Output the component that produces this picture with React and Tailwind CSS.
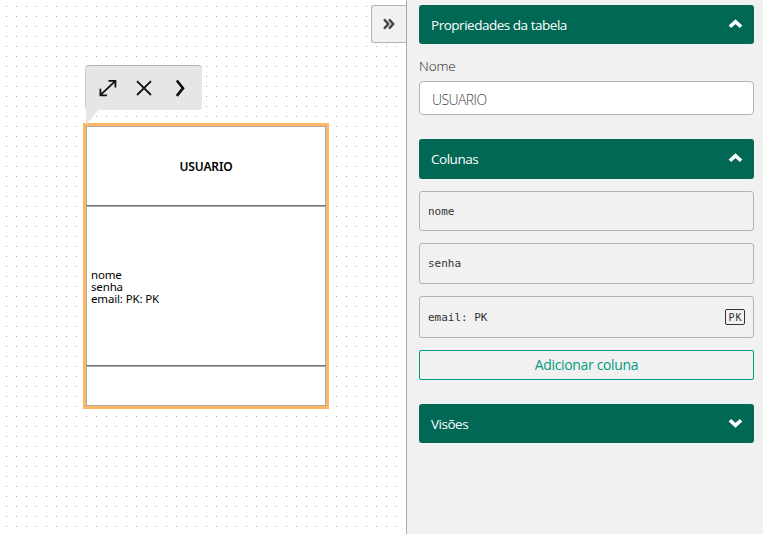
const ui = 'font-["Open_Sans","Noto_Sans",sans-serif]';

function Caret({ down }) {
  return (
    <svg width="15" height="10" viewBox="0 0 15 10" fill="none" stroke="#fff" strokeWidth="3.6" className="relative -top-px">
      <path d={down ? 'M1.9 2.2 7.5 7.4 13.1 2.2' : 'M1.9 7.8 7.5 2.6 13.1 7.8'} />
    </svg>
  );
}

function Header({ title, down, className }) {
  return (
    <div className={`flex shrink-0 items-center justify-between rounded-[3px] bg-[#006854] pl-3 pr-[11px] text-[13.5px] text-white ${className}`}>
      <span className="pt-px tracking-[-0.48px]">{title}</span>
      <Caret down={down} />
    </div>
  );
}

function ColumnRow({ name, pk, className }) {
  return (
    <div className={`flex shrink-0 items-center justify-between rounded-[3px] border border-[#b3b3b3] px-2 font-["DejaVu_Sans_Mono",monospace] text-[11px] leading-none tracking-[-0.02px] text-[#333] ${className}`}>
      <span>{name}</span>
      {pk && (
        <span className="flex h-4 w-5 items-center justify-center rounded-[2px] border border-[#333] pl-px pt-[2px] text-[10px] tracking-[1px]">
          PK
        </span>
      )}
    </div>
  );
}

function Canvas() {
  return (
    <main className="relative h-full w-[406px] overflow-hidden bg-white">
      <svg className="absolute inset-0" width="406" height="534">
        <defs>
          <pattern id="dots" width="10" height="10" patternUnits="userSpaceOnUse">
            <rect x="6" y="6" width="1" height="1" fill="#aaa" />
          </pattern>
        </defs>
        <rect width="406" height="534" fill="url(#dots)" />
      </svg>

      <section className="absolute left-[83px] top-[123px] h-[286px] w-[246px] border-[3px] border-[#ffb663] bg-white font-['Noto_Sans',sans-serif] text-[11.5px] text-black">
        <div className="flex h-full flex-col border border-[#aaa]">
          <div className="flex h-[78px] shrink-0 items-center justify-center pb-px pt-[3px] text-[12px] font-semibold">
            <span className="tracking-[-0.15px]">USUARIO</span>
          </div>
          <div className="-mx-px h-px shrink-0 bg-[#707070]" />
          <div className="-mx-px flex h-[159px] shrink-0 flex-col justify-center border border-b-0 border-[#aaa] pl-[4px] leading-[12px]">
            <p className="whitespace-pre-line pt-px tracking-[-0.15px]">{'nome\nsenha\nemail: PK: PK'}</p>
          </div>
          <div className="-mx-px h-px shrink-0 bg-[#707070]" />
          <div className="border-t border-[#aaa]" />
        </div>
      </section>

      <nav className="absolute left-[85px] top-[65px] h-[45px] w-[117px] rounded-[4px] border-l border-t border-l-[#ccc] border-t-[#b2b2b2] bg-[#e6e6e6]">
        <svg className="absolute left-0 top-0" width="117" height="62" fill="none" stroke="#111" strokeWidth="1.8">
          <path d="M0 43H13L0 59Z" fill="#e6e6e6" stroke="none" />
          <path d="M14.6 28.8 29.2 15.2M22.5 14.9H29.4V21.5M14.4 22.7V29.3H21" />
          <path d="M51 15.2 65 29M65 15.2 51 29" />
          <path d="M90.8 14.5 97 22.2 90.8 29.8" strokeWidth="2.7" />
        </svg>
      </nav>

      <button className="absolute left-[371px] top-[5px] flex h-[38px] w-[36px] items-center justify-center rounded-l-[3px] border border-r-0 border-[#b3b3b3] bg-[#f1f1f1]">
        <svg className="mr-px" width="12" height="12" viewBox="0 0 12 12" fill="none" stroke="#444" strokeWidth="2.4">
          <path d="M1.1 1.4 5.3 6 1.1 10.6M6 1.4 10.2 6 6 10.6" />
        </svg>
      </button>
    </main>
  );
}

export default function App() {
  return (
    <div className={`flex h-[534px] w-[763px] overflow-hidden ${ui}`}>
      <Canvas />
      <aside className="flex h-full w-[357px] flex-col border-l border-[#aaa] bg-[#f1f1f1] pl-3 pr-[9px] pt-[5px] text-[14px] text-[#333]">
        <Header title="Propriedades da tabela" className="h-[39px]" />
        <label className="mt-3 h-[25px] shrink-0 text-[13.5px] font-light leading-[21px] tracking-[-0.1px] text-[#222]">Nome</label>
        <div className="flex h-[34px] shrink-0 items-center rounded-[4px] border border-[#b3b3b3] bg-white pl-3 pt-[2px] text-[14px] font-light tracking-[-0.6px] text-[#444]">
          USUARIO
        </div>
        <Header title="Colunas" className="mt-6 h-[40px]" />
        <ColumnRow name="nome" className="mt-3 h-[40px]" />
        <ColumnRow name="senha" className="mt-3 h-[41px]" />
        <ColumnRow name="email: PK" pk className="mt-3 h-[42px]" />
        <button className="mt-3 flex h-[30px] shrink-0 items-center justify-center rounded-[2px] border border-[#009b80] pb-px tracking-[-0.35px] text-[#009b80]">
          Adicionar coluna
        </button>
        <Header title="Visões" down className="mt-6 h-[39px]" />
      </aside>
    </div>
  );
}
